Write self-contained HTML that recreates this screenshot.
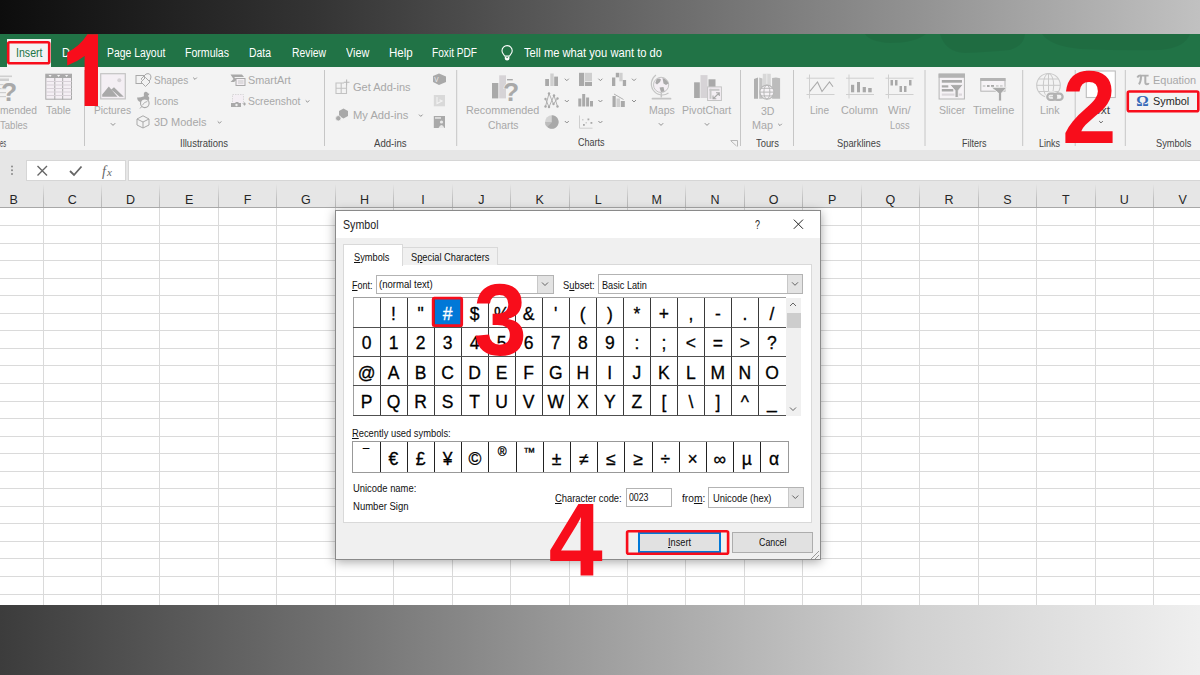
<!DOCTYPE html><html><head><meta charset="utf-8"><style>
html,body{margin:0;padding:0;width:1200px;height:675px;overflow:hidden;background:#fff}
body{position:relative;font-family:"Liberation Sans",sans-serif}
div{position:absolute}
.t{white-space:nowrap;transform-origin:0 0}
svg{position:absolute;overflow:visible}
</style></head><body>
<div style="left:0px;top:0px;width:1200px;height:34px;background:linear-gradient(to right,#0d0d0d 0%,#333333 25.8%,#626262 50.8%,#919191 75.8%,#c1c1c1 100%);"></div>
<div style="left:0px;top:34px;width:1200px;height:33px;background:#217346;"></div>
<div style="left:0px;top:67px;width:1200px;height:83px;background:#f3f3f3;"></div>
<div style="left:0px;top:150px;width:1200px;height:58px;background:#e6e6e6;"></div>
<div style="left:0px;top:208px;width:1200px;height:397px;background:#ffffff;"></div>
<div style="left:0px;top:605px;width:1200px;height:70px;background:linear-gradient(to right,#3c3c3c 0%,#6d6d6d 25.8%,#a0a0a0 50.8%,#d0d0d0 75.8%,#efefef 100%);"></div>
<div style="left:7px;top:39px;width:44px;height:28px;background:#f3f3f3;"></div>
<div class="t" style="left:15.5px;top:46.60px;font-size:12.5px;line-height:12.5px;color:#217346;transform:scaleX(0.8477);">Insert</div>
<div class="t" style="left:62px;top:46.60px;font-size:12.5px;line-height:12.5px;color:#fff;transform:scaleX(0.8862);">D</div>
<div class="t" style="left:106.7px;top:46.60px;font-size:12.5px;line-height:12.5px;color:#fff;transform:scaleX(0.8306);">Page Layout</div>
<div class="t" style="left:185px;top:46.60px;font-size:12.5px;line-height:12.5px;color:#fff;transform:scaleX(0.8447);">Formulas</div>
<div class="t" style="left:249px;top:46.60px;font-size:12.5px;line-height:12.5px;color:#fff;transform:scaleX(0.8332);">Data</div>
<div class="t" style="left:292px;top:46.60px;font-size:12.5px;line-height:12.5px;color:#fff;transform:scaleX(0.8296);">Review</div>
<div class="t" style="left:345.7px;top:46.60px;font-size:12.5px;line-height:12.5px;color:#fff;transform:scaleX(0.8672);">View</div>
<div class="t" style="left:389px;top:46.60px;font-size:12.5px;line-height:12.5px;color:#fff;transform:scaleX(0.9219);">Help</div>
<div class="t" style="left:432.3px;top:46.60px;font-size:12.5px;line-height:12.5px;color:#fff;transform:scaleX(0.8099);">Foxit PDF</div>
<div class="t" style="left:524.3px;top:46.60px;font-size:12.5px;line-height:12.5px;color:#fff;transform:scaleX(0.8947);">Tell me what you want to do</div>
<div style="left:43px;top:208px;width:1px;height:397px;background:#dadada"></div>
<div style="left:43px;top:184px;width:1px;height:24px;background:linear-gradient(#e6e6e6,#c0c0c0 60%,#b8b8b8)"></div>
<div style="left:101px;top:208px;width:1px;height:397px;background:#dadada"></div>
<div style="left:101px;top:184px;width:1px;height:24px;background:linear-gradient(#e6e6e6,#c0c0c0 60%,#b8b8b8)"></div>
<div style="left:159px;top:208px;width:1px;height:397px;background:#dadada"></div>
<div style="left:159px;top:184px;width:1px;height:24px;background:linear-gradient(#e6e6e6,#c0c0c0 60%,#b8b8b8)"></div>
<div style="left:218px;top:208px;width:1px;height:397px;background:#dadada"></div>
<div style="left:218px;top:184px;width:1px;height:24px;background:linear-gradient(#e6e6e6,#c0c0c0 60%,#b8b8b8)"></div>
<div style="left:276px;top:208px;width:1px;height:397px;background:#dadada"></div>
<div style="left:276px;top:184px;width:1px;height:24px;background:linear-gradient(#e6e6e6,#c0c0c0 60%,#b8b8b8)"></div>
<div style="left:335px;top:208px;width:1px;height:397px;background:#dadada"></div>
<div style="left:335px;top:184px;width:1px;height:24px;background:linear-gradient(#e6e6e6,#c0c0c0 60%,#b8b8b8)"></div>
<div style="left:393px;top:208px;width:1px;height:397px;background:#dadada"></div>
<div style="left:393px;top:184px;width:1px;height:24px;background:linear-gradient(#e6e6e6,#c0c0c0 60%,#b8b8b8)"></div>
<div style="left:452px;top:208px;width:1px;height:397px;background:#dadada"></div>
<div style="left:452px;top:184px;width:1px;height:24px;background:linear-gradient(#e6e6e6,#c0c0c0 60%,#b8b8b8)"></div>
<div style="left:510px;top:208px;width:1px;height:397px;background:#dadada"></div>
<div style="left:510px;top:184px;width:1px;height:24px;background:linear-gradient(#e6e6e6,#c0c0c0 60%,#b8b8b8)"></div>
<div style="left:569px;top:208px;width:1px;height:397px;background:#dadada"></div>
<div style="left:569px;top:184px;width:1px;height:24px;background:linear-gradient(#e6e6e6,#c0c0c0 60%,#b8b8b8)"></div>
<div style="left:627px;top:208px;width:1px;height:397px;background:#dadada"></div>
<div style="left:627px;top:184px;width:1px;height:24px;background:linear-gradient(#e6e6e6,#c0c0c0 60%,#b8b8b8)"></div>
<div style="left:685px;top:208px;width:1px;height:397px;background:#dadada"></div>
<div style="left:685px;top:184px;width:1px;height:24px;background:linear-gradient(#e6e6e6,#c0c0c0 60%,#b8b8b8)"></div>
<div style="left:744px;top:208px;width:1px;height:397px;background:#dadada"></div>
<div style="left:744px;top:184px;width:1px;height:24px;background:linear-gradient(#e6e6e6,#c0c0c0 60%,#b8b8b8)"></div>
<div style="left:802px;top:208px;width:1px;height:397px;background:#dadada"></div>
<div style="left:802px;top:184px;width:1px;height:24px;background:linear-gradient(#e6e6e6,#c0c0c0 60%,#b8b8b8)"></div>
<div style="left:861px;top:208px;width:1px;height:397px;background:#dadada"></div>
<div style="left:861px;top:184px;width:1px;height:24px;background:linear-gradient(#e6e6e6,#c0c0c0 60%,#b8b8b8)"></div>
<div style="left:919px;top:208px;width:1px;height:397px;background:#dadada"></div>
<div style="left:919px;top:184px;width:1px;height:24px;background:linear-gradient(#e6e6e6,#c0c0c0 60%,#b8b8b8)"></div>
<div style="left:978px;top:208px;width:1px;height:397px;background:#dadada"></div>
<div style="left:978px;top:184px;width:1px;height:24px;background:linear-gradient(#e6e6e6,#c0c0c0 60%,#b8b8b8)"></div>
<div style="left:1036px;top:208px;width:1px;height:397px;background:#dadada"></div>
<div style="left:1036px;top:184px;width:1px;height:24px;background:linear-gradient(#e6e6e6,#c0c0c0 60%,#b8b8b8)"></div>
<div style="left:1095px;top:208px;width:1px;height:397px;background:#dadada"></div>
<div style="left:1095px;top:184px;width:1px;height:24px;background:linear-gradient(#e6e6e6,#c0c0c0 60%,#b8b8b8)"></div>
<div style="left:1153px;top:208px;width:1px;height:397px;background:#dadada"></div>
<div style="left:1153px;top:184px;width:1px;height:24px;background:linear-gradient(#e6e6e6,#c0c0c0 60%,#b8b8b8)"></div>
<div style="left:1212px;top:208px;width:1px;height:397px;background:#dadada"></div>
<div style="left:1212px;top:184px;width:1px;height:24px;background:linear-gradient(#e6e6e6,#c0c0c0 60%,#b8b8b8)"></div>
<div style="left:0px;top:225px;width:1200px;height:1px;background:#dadada"></div>
<div style="left:0px;top:243px;width:1200px;height:1px;background:#dadada"></div>
<div style="left:0px;top:260px;width:1200px;height:1px;background:#dadada"></div>
<div style="left:0px;top:278px;width:1200px;height:1px;background:#dadada"></div>
<div style="left:0px;top:295px;width:1200px;height:1px;background:#dadada"></div>
<div style="left:0px;top:313px;width:1200px;height:1px;background:#dadada"></div>
<div style="left:0px;top:330px;width:1200px;height:1px;background:#dadada"></div>
<div style="left:0px;top:348px;width:1200px;height:1px;background:#dadada"></div>
<div style="left:0px;top:365px;width:1200px;height:1px;background:#dadada"></div>
<div style="left:0px;top:383px;width:1200px;height:1px;background:#dadada"></div>
<div style="left:0px;top:401px;width:1200px;height:1px;background:#dadada"></div>
<div style="left:0px;top:418px;width:1200px;height:1px;background:#dadada"></div>
<div style="left:0px;top:436px;width:1200px;height:1px;background:#dadada"></div>
<div style="left:0px;top:453px;width:1200px;height:1px;background:#dadada"></div>
<div style="left:0px;top:471px;width:1200px;height:1px;background:#dadada"></div>
<div style="left:0px;top:488px;width:1200px;height:1px;background:#dadada"></div>
<div style="left:0px;top:506px;width:1200px;height:1px;background:#dadada"></div>
<div style="left:0px;top:523px;width:1200px;height:1px;background:#dadada"></div>
<div style="left:0px;top:541px;width:1200px;height:1px;background:#dadada"></div>
<div style="left:0px;top:558px;width:1200px;height:1px;background:#dadada"></div>
<div style="left:0px;top:576px;width:1200px;height:1px;background:#dadada"></div>
<div style="left:0px;top:594px;width:1200px;height:1px;background:#dadada"></div>
<div style="left:0px;top:207px;width:1200px;height:1px;background:#a8a8a8;"></div>
<div class="t" style="left:9.6px;top:194.4px;font-size:12.5px;line-height:12.5px;color:#262626">B</div>
<div class="t" style="left:67.7px;top:194.4px;font-size:12.5px;line-height:12.5px;color:#262626">C</div>
<div class="t" style="left:126.1px;top:194.4px;font-size:12.5px;line-height:12.5px;color:#262626">D</div>
<div class="t" style="left:184.9px;top:194.4px;font-size:12.5px;line-height:12.5px;color:#262626">E</div>
<div class="t" style="left:243.7px;top:194.4px;font-size:12.5px;line-height:12.5px;color:#262626">F</div>
<div class="t" style="left:301.1px;top:194.4px;font-size:12.5px;line-height:12.5px;color:#262626">G</div>
<div class="t" style="left:359.9px;top:194.4px;font-size:12.5px;line-height:12.5px;color:#262626">H</div>
<div class="t" style="left:421.2px;top:194.4px;font-size:12.5px;line-height:12.5px;color:#262626">I</div>
<div class="t" style="left:478.2px;top:194.4px;font-size:12.5px;line-height:12.5px;color:#262626">J</div>
<div class="t" style="left:535.6px;top:194.4px;font-size:12.5px;line-height:12.5px;color:#262626">K</div>
<div class="t" style="left:594.8px;top:194.4px;font-size:12.5px;line-height:12.5px;color:#262626">L</div>
<div class="t" style="left:651.5px;top:194.4px;font-size:12.5px;line-height:12.5px;color:#262626">M</div>
<div class="t" style="left:710.6px;top:194.4px;font-size:12.5px;line-height:12.5px;color:#262626">N</div>
<div class="t" style="left:768.7px;top:194.4px;font-size:12.5px;line-height:12.5px;color:#262626">O</div>
<div class="t" style="left:827.9px;top:194.4px;font-size:12.5px;line-height:12.5px;color:#262626">P</div>
<div class="t" style="left:885.6px;top:194.4px;font-size:12.5px;line-height:12.5px;color:#262626">Q</div>
<div class="t" style="left:944.4px;top:194.4px;font-size:12.5px;line-height:12.5px;color:#262626">R</div>
<div class="t" style="left:1003.2px;top:194.4px;font-size:12.5px;line-height:12.5px;color:#262626">S</div>
<div class="t" style="left:1062.0px;top:194.4px;font-size:12.5px;line-height:12.5px;color:#262626">T</div>
<div class="t" style="left:1119.8px;top:194.4px;font-size:12.5px;line-height:12.5px;color:#262626">U</div>
<div class="t" style="left:1178.6px;top:194.4px;font-size:12.5px;line-height:12.5px;color:#262626">V</div>
<div style="left:26px;top:160px;width:100px;height:21px;background:#fff;border:1px solid #d6d6d6;box-sizing:border-box;"></div>
<div style="left:128px;top:160px;width:1072px;height:21px;background:#fff;border:1px solid #d6d6d6;box-sizing:border-box;border-right:none;"></div>
<svg style="left:0;top:0" width="1200" height="675" viewBox="0 0 1200 675"><path d="M865 34 H926 Q915 43 890 43 Q870 42 865 34Z M940 34 H1025 Q1024 46 1010 50 Q990 52 965 53 Q945 52 940 34Z M1042 34 H1190 Q1185 48 1160 50 Q1120 51 1080 49 Q1050 46 1042 34Z" fill="#000" fill-opacity="0.06"/><line x1="84.5" y1="70" x2="84.5" y2="146" stroke="#c6c6c6" stroke-width="1"/><line x1="324.5" y1="70" x2="324.5" y2="146" stroke="#c6c6c6" stroke-width="1"/><line x1="456.7" y1="70" x2="456.7" y2="146" stroke="#c6c6c6" stroke-width="1"/><line x1="740.5" y1="70" x2="740.5" y2="146" stroke="#c6c6c6" stroke-width="1"/><line x1="793.5" y1="70" x2="793.5" y2="146" stroke="#c6c6c6" stroke-width="1"/><line x1="925" y1="70" x2="925" y2="146" stroke="#c6c6c6" stroke-width="1"/><line x1="1022.7" y1="70" x2="1022.7" y2="146" stroke="#c6c6c6" stroke-width="1"/><line x1="1075.2" y1="70" x2="1075.2" y2="146" stroke="#c6c6c6" stroke-width="1"/><line x1="1125.3" y1="70" x2="1125.3" y2="146" stroke="#c6c6c6" stroke-width="1"/><rect x="-2" y="75.5" width="14" height="1.6" fill="#cfcfcf"/><rect x="-2" y="78.5" width="11" height="2.5" fill="#cfcfcf"/><rect x="-2" y="84" width="8" height="1.2" fill="#cfcfcf"/><rect x="-2" y="88" width="8" height="1.2" fill="#cfcfcf"/><rect x="-2" y="92" width="8" height="1.2" fill="#cfcfcf"/><rect x="-2" y="96" width="8" height="1.2" fill="#cfcfcf"/><text x="1" y="100.8" font-family="Liberation Sans" font-weight="bold" font-size="26.5" fill="#a9a9a9" stroke="#f3f3f3" stroke-width="1.2" paint-order="stroke">?</text><rect x="45.8" y="74.2" width="25.7" height="25" fill="#f4eff4" stroke="#a9a9a9" stroke-width="1"/><rect x="45.8" y="74.2" width="25.7" height="3.8" fill="#a9a9a9"/><line x1="54.8" y1="74" x2="54.8" y2="99.5" stroke="#a9a9a9" stroke-width="1"/><line x1="62.7" y1="74" x2="62.7" y2="99.5" stroke="#a9a9a9" stroke-width="1"/><line x1="46" y1="81.5" x2="71.5" y2="81.5" stroke="#d9d2d9" stroke-width="1"/><line x1="46" y1="85" x2="71.5" y2="85" stroke="#d9d2d9" stroke-width="1"/><line x1="46" y1="88.5" x2="71.5" y2="88.5" stroke="#d9d2d9" stroke-width="1"/><line x1="46" y1="92" x2="71.5" y2="92" stroke="#d9d2d9" stroke-width="1"/><line x1="46" y1="95.5" x2="71.5" y2="95.5" stroke="#d9d2d9" stroke-width="1"/><path d="M48.5 75 l1.6 2 l1.6-2 M57 75 l1.6 2 l1.6-2 M65 75 l1.6 2 l1.6-2" fill="#f3f3f3"/><rect x="100.7" y="73.7" width="24.6" height="25.2" fill="#f4eff4" stroke="#c4c4c4" stroke-width="1.2"/><path d="M102.2 96.8 V94.5 L108.8 86.5 L117.5 96.8Z M111.3 89.5 L114 87.2 L123.8 96.8 H119.5Z" fill="#a9a9a9"/><circle cx="119.3" cy="80.3" r="2" fill="#d6d2d6"/><path d="M110.8 123.2L113 125.39999999999999L115.2 123.2" fill="none" stroke="#8f8f8f" stroke-width="1"/><rect x="136" y="75.5" width="8.5" height="8" fill="none" stroke="#a9a9a9" stroke-width="1"/><path d="M141 79 L146 74 Q150.5 72.5 151 77 Q151 80 148 82 L146 84 L141.5 79.5 Z" fill="none" stroke="#a9a9a9" stroke-width="1"/><path d="M141 82 L145.5 77.5 L150 82 L145.5 86.5Z" fill="#f3f3f3" stroke="#a9a9a9" stroke-width="1"/><path d="M193.2 77.6L195 79.4L196.8 77.6" fill="none" stroke="#8f8f8f" stroke-width="1"/><path d="M137 97.5 Q137.5 102.5 143 102.5 L147 101.5 Q150 99.5 149 97 L147.8 96 Q149.5 94.8 149.3 93.6 L148 93.6 Q147.5 91.5 145.5 91.8 Q143.3 92.3 143.8 94.8 L144 96.3 Q140 97.8 137 97.5Z" fill="#a9a9a9"/><circle cx="144.8" cy="103.3" r="4.3" fill="#f3f3f3" stroke="#a9a9a9" stroke-width="1.1"/><path d="M142.3 105.3 Q144.5 101.5 147.3 101.5" fill="none" stroke="#a9a9a9" stroke-width="0.9"/><path d="M141.8 106.5 L140 108.5" stroke="#a9a9a9" stroke-width="1"/><path d="M143 115.8 L149 119 V125 L143 128 L137 125 V119Z M137 119 L143 122 L149 119 M143 122 V128" fill="none" stroke="#a9a9a9" stroke-width="1"/><path d="M217.7 121.39999999999999L219.5 123.2L221.3 121.39999999999999" fill="none" stroke="#8f8f8f" stroke-width="1"/><path d="M230.5 74.5 H242 L244 77 H234 L237 79.5 L234 82 H230.5 L233.5 79Z" fill="#a9a9a9"/><rect x="236" y="78.5" width="9" height="7" fill="#f4eff4" stroke="#a9a9a9" stroke-width="1"/><line x1="238" y1="81" x2="243.5" y2="81" stroke="#c8c8c8"/><line x1="238" y1="83" x2="243.5" y2="83" stroke="#c8c8c8"/><rect x="232.5" y="94.5" width="11" height="9" fill="#f4eff4" stroke="#d0d0d0" stroke-width="0.8" stroke-dasharray="1.5 1"/><path d="M231 103 H235 L236 102 H238 L239 103 H241 V107 H231Z" fill="#a9a9a9"/><circle cx="236.5" cy="105" r="1.2" fill="#eee"/><path d="M243 104 H246 M244.5 102.5 V105.5" stroke="#a9a9a9" stroke-width="1.2"/><path d="M305.7 100.39999999999999L307.5 102.2L309.3 100.39999999999999" fill="none" stroke="#8f8f8f" stroke-width="1"/><path d="M336 83 H346.5 V93.5 H336Z M336 88.3 H346.5 M341.2 83 V93.5" fill="none" stroke="#c2c2c2" stroke-width="1.1"/><rect x="344" y="81" width="4.5" height="3.5" fill="#f3f3f3"/><path d="M343.8 82.3 H349.5 M346.6 79.5 V85.2" stroke="#b9b9b9" stroke-width="1.1"/><path d="M343.5 108.5 L348 111 V116 L343.5 118.5 L339 116 V111Z" fill="#a9a9a9"/><circle cx="338.3" cy="118.3" r="2.7" fill="#a9a9a9" stroke="#f3f3f3" stroke-width="0.8"/><path d="M419.0 114.6L420.8 116.4L422.6 114.6" fill="none" stroke="#8f8f8f" stroke-width="1"/><path d="M433 76 L439 73.5 L446 76.5 V82 L439 85 L433 82Z" fill="#a9a9a9"/><text x="434.2" y="82" font-size="6.5" fill="#eee" font-family="Liberation Sans">V</text><rect x="433.8" y="95" width="11.2" height="11.3" fill="#d9d9d9"/><path d="M437 97 V103.5 L442 101 L439.5 99.8" fill="none" stroke="#f3f3f3" stroke-width="1.1"/><rect x="433.8" y="116" width="11.2" height="12" fill="#a9a9a9"/><rect x="435" y="117.2" width="6" height="1.5" fill="#e8e8e8"/><circle cx="441.5" cy="122" r="1.6" fill="#e8e8e8"/><path d="M438.5 128 Q441.5 122 444.5 128Z" fill="#e8e8e8"/><rect x="492" y="83" width="6.3" height="15.4" fill="#a9a9a9"/><rect x="499.2" y="75.3" width="6.8" height="23.1" fill="#d6d3d6"/><rect x="507" y="79" width="5.8" height="1.4" fill="#a9a9a9"/><text x="503" y="100.8" font-family="Liberation Sans" font-weight="bold" font-size="26.5" fill="#a9a9a9" stroke="#f3f3f3" stroke-width="1.2" paint-order="stroke">?</text><rect x="545.2" y="79" width="3.8" height="7" fill="#a9a9a9"/><rect x="550.3" y="73.5" width="3.4" height="12.5" fill="#cfcfcf"/><rect x="554.2" y="76.6" width="3.8" height="9.4" fill="#a9a9a9"/><rect x="579" y="72.8" width="5.2" height="13.2" fill="#a9a9a9"/><rect x="585" y="72.8" width="7" height="8.5" fill="#cfcfcf"/><rect x="585" y="82" width="7" height="4" fill="#a9a9a9"/><rect x="612" y="77.5" width="3.3" height="8.5" fill="#a9a9a9"/><rect x="615.8" y="72.8" width="3.3" height="4.5" fill="#a9a9a9"/><rect x="619.3" y="72.8" width="3.3" height="8.5" fill="#cfcfcf"/><rect x="622.8" y="80" width="3.3" height="6" fill="#a9a9a9"/><path d="M545.5 106.5 L549 93.5 L553.5 104 L557.5 98.5 M545.5 99 L549 107 L554 95.5 L557.5 106.5" fill="none" stroke="#a9a9a9" stroke-width="0.9"/><circle cx="545.5" cy="106.5" r="1.2" fill="#a9a9a9"/><circle cx="549" cy="93.5" r="1.2" fill="#a9a9a9"/><circle cx="553.5" cy="104" r="1.2" fill="#a9a9a9"/><circle cx="557.5" cy="98.5" r="1.2" fill="#a9a9a9"/><circle cx="545.5" cy="99" r="1.2" fill="#a9a9a9"/><circle cx="549" cy="107" r="1.2" fill="#a9a9a9"/><circle cx="554" cy="95.5" r="1.2" fill="#a9a9a9"/><circle cx="557.5" cy="106.5" r="1.2" fill="#a9a9a9"/><rect x="578.3" y="98.5" width="3" height="8" fill="#a9a9a9"/><rect x="582.2" y="94" width="3" height="12.5" fill="#a9a9a9"/><rect x="586.1" y="97.5" width="3" height="9" fill="#a9a9a9"/><rect x="590" y="101" width="3" height="5.5" fill="#a9a9a9"/><rect x="612.5" y="96" width="3.2" height="11" fill="#a9a9a9"/><rect x="616.5" y="98.5" width="3.5" height="8.5" fill="#cfcfcf"/><rect x="620.8" y="101" width="4" height="6" fill="#a9a9a9"/><path d="M614 94 L623.5 99.5" stroke="#a9a9a9" stroke-width="0.9"/><circle cx="551.8" cy="122" r="6.8" fill="#d4d4d4"/><path d="M551.8 122 V115.2 A6.8 6.8 0 1 1 547 126.8 Z" fill="#a9a9a9"/><path d="M551.8 122 L547 126.8 A6.8 6.8 0 0 1 545 122 Z" fill="#bcbcbc"/><path d="M579.5 115.5 V128.2 H592.5" fill="none" stroke="#cfcfcf" stroke-width="1"/><rect x="583" y="124" width="1.8" height="1.8" fill="#a9a9a9"/><rect x="587.5" y="118.5" width="1.8" height="1.8" fill="#a9a9a9"/><rect x="590.5" y="122" width="1.8" height="1.8" fill="#a9a9a9"/><rect x="582" y="119" width="1.5" height="1.5" fill="#cfcfcf"/><rect x="585.5" y="122" width="1.5" height="1.5" fill="#cfcfcf"/><path d="M564.8 78.7L566.8 80.7L568.8 78.7" fill="none" stroke="#8f8f8f" stroke-width="1"/><path d="M564.8 100.0L566.8 102.0L568.8 100.0" fill="none" stroke="#8f8f8f" stroke-width="1"/><path d="M564.8 121.0L566.8 123.0L568.8 121.0" fill="none" stroke="#8f8f8f" stroke-width="1"/><path d="M598.4 78.7L600.4 80.7L602.4 78.7" fill="none" stroke="#8f8f8f" stroke-width="1"/><path d="M598.4 100.0L600.4 102.0L602.4 100.0" fill="none" stroke="#8f8f8f" stroke-width="1"/><path d="M598.4 121.0L600.4 123.0L602.4 121.0" fill="none" stroke="#8f8f8f" stroke-width="1"/><path d="M632.0 78.7L634 80.7L636.0 78.7" fill="none" stroke="#8f8f8f" stroke-width="1"/><path d="M632.0 100.0L634 102.0L636.0 100.0" fill="none" stroke="#8f8f8f" stroke-width="1"/><circle cx="661.1" cy="84.9" r="7.6" fill="#f4eff4" stroke="#c4c4c4" stroke-width="1"/><path d="M656.5 79.5 Q659 77.5 661 79.5 L660 82 L657 84.5 L655.3 83Z M662.5 78 Q667 79 668.5 83.5 L666 85 L663.5 83.5Z M659.5 87.5 L663.5 87 L664.5 91.5 L661 92Z" fill="#a9a9a9"/><path d="M656 75 A10.8 10.8 0 1 0 668.5 93" fill="none" stroke="#c4c4c4" stroke-width="1.1"/><path d="M661.3 93 V97.5" stroke="#c4c4c4" stroke-width="1.5"/><path d="M652.5 98.7 H670.5" stroke="#c4c4c4" stroke-width="1.8" stroke-linecap="round"/><path d="M658.8 123.2L661 125.39999999999999L663.2 123.2" fill="none" stroke="#8f8f8f" stroke-width="1"/><rect x="694.1" y="82.3" width="5.7" height="15.7" fill="#a9a9a9"/><rect x="700.5" y="75.1" width="7" height="22.9" fill="#d6d3d6"/><rect x="708.5" y="79.3" width="7" height="8" fill="#a9a9a9"/><rect x="707.6" y="86.9" width="13.8" height="13.6" fill="#f4eff4" stroke="#c4c4c4" stroke-width="1"/><rect x="709.5" y="88.8" width="10" height="2" fill="#c8c8c8"/><rect x="709.5" y="88.8" width="2" height="10" fill="#c8c8c8"/><path d="M713.5 98.5 L719 93 M713 95.5 V98.8 H716.3 M719.3 96 V92.7 H716" fill="none" stroke="#a9a9a9" stroke-width="1.1"/><path d="M704.8 123.2L707 125.39999999999999L709.2 123.2" fill="none" stroke="#8f8f8f" stroke-width="1"/><path d="M754 79 L758 77.6 V98.7 L754 98.7Z" fill="#b0b0b0"/><path d="M759.2 77.6 L762.5 78.5 V98.7 H759.2Z" fill="#c2c2c2"/><rect x="762.8" y="73.8" width="8" height="24.5" fill="#d8d8d8"/><line x1="766.8" y1="73.8" x2="766.8" y2="90" stroke="#f3f3f3" stroke-width="0.7"/><path d="M772.1 78 L776 77.4 L780.1 78.3 V98.7 H772.1Z" fill="#bcbcbc"/><circle cx="766.9" cy="92.1" r="7" fill="#f6f3f6" stroke="#b8b8b8" stroke-width="1.2"/><ellipse cx="766.9" cy="92.1" rx="3" ry="7" fill="none" stroke="#b8b8b8" stroke-width="1"/><path d="M760 92.1 H773.8 M761 88.3 H772.8 M761 95.9 H772.8" stroke="#b8b8b8" stroke-width="1"/><path d="M778.2 123.8L780 125.60000000000001L781.8 123.8" fill="none" stroke="#8f8f8f" stroke-width="1"/><path d="M806.5 78.2 H834.5 M806.5 94.5 H834.5 M809.5 74.5 V98.5" stroke="#cfcfcf" stroke-width="1"/><path d="M846 78.2 H874 M846 94.5 H874 M849 74.5 V98.5" stroke="#cfcfcf" stroke-width="1"/><path d="M885.5 78.2 H913.5 M885.5 94.5 H913.5 M888.5 74.5 V98.5" stroke="#cfcfcf" stroke-width="1"/><path d="M809.8 91.3 L817.5 82 L822 91.5 L829.5 82 L833 86.8" fill="none" stroke="#ababab" stroke-width="1.1"/><rect x="851" y="84.8" width="3.2" height="7.5" fill="#a9a9a9"/><rect x="857" y="82" width="3" height="10.3" fill="#a9a9a9"/><rect x="862.7" y="87" width="3.2" height="5.3" fill="#a9a9a9"/><rect x="868.2" y="88" width="3.5" height="4.3" fill="#a9a9a9"/><rect x="890.5" y="80" width="2.5" height="5.5" fill="#a9a9a9"/><rect x="895" y="80" width="2.5" height="5.5" fill="#a9a9a9"/><rect x="899.5" y="86" width="2.5" height="6" fill="#a9a9a9"/><rect x="904" y="86" width="2.5" height="6" fill="#a9a9a9"/><rect x="909" y="80" width="2.5" height="5.5" fill="#a9a9a9"/><rect x="939.1" y="74.1" width="25.3" height="24.9" fill="#f6f3f6" stroke="#b5b5b5" stroke-width="1"/><rect x="938.6" y="73.6" width="26.3" height="4.2" fill="#b3b3b3"/><rect x="941.8" y="80" width="20.2" height="2.7" fill="#a9a9a9"/><rect x="941.8" y="85.3" width="6.5" height="2.2" fill="#a9a9a9"/><rect x="941.8" y="89" width="11.5" height="2.5" fill="#a9a9a9"/><rect x="941.8" y="93.5" width="20.2" height="2.2" fill="#dcd7dc"/><path d="M949.8 84.6 H963.2 L958.3 90.5 V97.5 H955 V90.5Z" fill="#a9a9a9" stroke="#f6f3f6" stroke-width="0.9"/><rect x="980.8" y="78.6" width="24.2" height="12.6" fill="#f6f3f6" stroke="#b5b5b5" stroke-width="1"/><rect x="980.3" y="78.1" width="25.2" height="2.9" fill="#b3b3b3"/><rect x="982.8" y="85" width="2.6" height="2" fill="#d2d2d2"/><rect x="987" y="85" width="2.6" height="2" fill="#a9a9a9"/><rect x="991" y="85" width="3" height="2" fill="#a9a9a9"/><rect x="996" y="85" width="2.6" height="2" fill="#d2d2d2"/><rect x="1000" y="85" width="2.6" height="2" fill="#d2d2d2"/><path d="M991 87.3 H1007 L1001.6 93 V101 H998.4 V93Z" fill="#a9a9a9" stroke="#f3f3f3" stroke-width="0.9"/><circle cx="1048.5" cy="85.3" r="11.8" fill="#f3f3f3" stroke="#c9c9c9" stroke-width="1.1"/><ellipse cx="1048.5" cy="85.3" rx="5.2" ry="11.8" fill="none" stroke="#c9c9c9" stroke-width="1"/><path d="M1036.7 85.3 H1060.3 M1038.5 79 H1058.5 M1038.5 91.5 H1058.5 M1048.5 73.5 V97" stroke="#c9c9c9" stroke-width="1"/><rect x="1047.3" y="93.6" width="8.8" height="6.2" rx="3.1" fill="none" stroke="#f3f3f3" stroke-width="4.5"/><rect x="1047.3" y="93.6" width="8.8" height="6.2" rx="3.1" fill="none" stroke="#b3b3b3" stroke-width="2.3"/><rect x="1053.8" y="93.6" width="8.8" height="6.2" rx="3.1" fill="none" stroke="#b3b3b3" stroke-width="2.3"/><rect x="1086.3" y="71" width="29" height="26.5" fill="#fff" stroke="#bdbdbd" stroke-width="1.1"/><path d="M1099.2 121.1L1101 122.9L1102.8 121.1" fill="none" stroke="#666" stroke-width="1"/><path d="M1137.3 77.5 Q1138.5 75.3 1141 75.6 H1148.6" fill="none" stroke="#b0b0b0" stroke-width="1.9"/><path d="M1141 76 Q1141 81.5 1139 84.3" fill="none" stroke="#b0b0b0" stroke-width="2"/><path d="M1145.3 76 V82 Q1145.3 84.3 1147 84.3 Q1148.2 84.3 1148.6 83" fill="none" stroke="#b0b0b0" stroke-width="2"/><text x="1136.2" y="106" font-family="Liberation Serif" font-weight="bold" font-size="15.5" fill="#3568b8">Ω</text></svg>
<div class="t" style="left:0px;top:104.69px;font-size:11.5px;line-height:11.5px;color:#a8a8a8;transform:scaleX(0.8903);">mended</div>
<div class="t" style="left:0px;top:119.69px;font-size:11.5px;line-height:11.5px;color:#a8a8a8;transform:scaleX(0.8303);">Tables</div>
<div class="t" style="left:46px;top:104.69px;font-size:11.5px;line-height:11.5px;color:#a8a8a8;transform:scaleX(0.8984);">Table</div>
<div class="t" style="left:94px;top:104.69px;font-size:11.5px;line-height:11.5px;color:#a8a8a8;transform:scaleX(0.8907);">Pictures</div>
<div class="t" style="left:153.8px;top:74.69px;font-size:11.5px;line-height:11.5px;color:#a8a8a8;transform:scaleX(0.8768);">Shapes</div>
<div class="t" style="left:153.8px;top:95.59px;font-size:11.5px;line-height:11.5px;color:#a8a8a8;transform:scaleX(0.8913);">Icons</div>
<div class="t" style="left:153.8px;top:116.89px;font-size:11.5px;line-height:11.5px;color:#a8a8a8;transform:scaleX(0.9551);">3D Models</div>
<div class="t" style="left:248px;top:74.69px;font-size:11.5px;line-height:11.5px;color:#a8a8a8;transform:scaleX(0.9434);">SmartArt</div>
<div class="t" style="left:248px;top:95.59px;font-size:11.5px;line-height:11.5px;color:#a8a8a8;transform:scaleX(0.8990);">Screenshot</div>
<div class="t" style="left:352.5px;top:81.89px;font-size:11.5px;line-height:11.5px;color:#a8a8a8;transform:scaleX(0.9569);">Get Add-ins</div>
<div class="t" style="left:352.5px;top:110.19px;font-size:11.5px;line-height:11.5px;color:#a8a8a8;transform:scaleX(0.9722);">My Add-ins</div>
<div class="t" style="left:465.8px;top:104.69px;font-size:11.5px;line-height:11.5px;color:#a8a8a8;transform:scaleX(0.9386);">Recommended</div>
<div class="t" style="left:487.5px;top:119.69px;font-size:11.5px;line-height:11.5px;color:#a8a8a8;transform:scaleX(0.9005);">Charts</div>
<div class="t" style="left:648.6px;top:105.39px;font-size:11.5px;line-height:11.5px;color:#a8a8a8;transform:scaleX(0.9174);">Maps</div>
<div class="t" style="left:682.4px;top:105.39px;font-size:11.5px;line-height:11.5px;color:#a8a8a8;transform:scaleX(0.9164);">PivotChart</div>
<div class="t" style="left:760.5px;top:106.19px;font-size:11.5px;line-height:11.5px;color:#a8a8a8;transform:scaleX(0.9183);">3D</div>
<div class="t" style="left:752px;top:120.39px;font-size:11.5px;line-height:11.5px;color:#a8a8a8;transform:scaleX(0.9387);">Map</div>
<div class="t" style="left:810.3px;top:105.19px;font-size:11.5px;line-height:11.5px;color:#a8a8a8;transform:scaleX(0.8738);">Line</div>
<div class="t" style="left:840.5px;top:105.19px;font-size:11.5px;line-height:11.5px;color:#a8a8a8;transform:scaleX(0.9362);">Column</div>
<div class="t" style="left:887.7px;top:105.19px;font-size:11.5px;line-height:11.5px;color:#a8a8a8;transform:scaleX(0.9826);">Win/</div>
<div class="t" style="left:889.5px;top:119.89px;font-size:11.5px;line-height:11.5px;color:#a8a8a8;transform:scaleX(0.8027);">Loss</div>
<div class="t" style="left:938.7px;top:104.89px;font-size:11.5px;line-height:11.5px;color:#a8a8a8;transform:scaleX(0.9146);">Slicer</div>
<div class="t" style="left:972.5px;top:104.89px;font-size:11.5px;line-height:11.5px;color:#a8a8a8;transform:scaleX(0.9598);">Timeline</div>
<div class="t" style="left:1040px;top:104.89px;font-size:11.5px;line-height:11.5px;color:#a8a8a8;transform:scaleX(0.9243);">Link</div>
<div class="t" style="left:1153.3px;top:74.59px;font-size:11.5px;line-height:11.5px;color:#a8a8a8;transform:scaleX(0.9515);">Equation</div>
<div class="t" style="left:1088px;top:104.89px;font-size:11.5px;line-height:11.5px;color:#444;transform:scaleX(1.0431);">Text</div>
<div class="t" style="left:1153.3px;top:95.59px;font-size:11.5px;line-height:11.5px;color:#262626;transform:scaleX(0.9440);">Symbol</div>
<div class="t" style="left:0px;top:138.09px;font-size:11.5px;line-height:11.5px;color:#444444;transform:scaleX(0.4940);">es</div>
<div class="t" style="left:180px;top:137.69px;font-size:11.5px;line-height:11.5px;color:#444444;transform:scaleX(0.8253);">Illustrations</div>
<div class="t" style="left:373.7px;top:137.69px;font-size:11.5px;line-height:11.5px;color:#444444;transform:scaleX(0.8360);">Add-ins</div>
<div class="t" style="left:577.6px;top:137.39px;font-size:11.5px;line-height:11.5px;color:#444444;transform:scaleX(0.7794);">Charts</div>
<div class="t" style="left:755.6px;top:137.89px;font-size:11.5px;line-height:11.5px;color:#444444;transform:scaleX(0.8143);">Tours</div>
<div class="t" style="left:836.8px;top:137.69px;font-size:11.5px;line-height:11.5px;color:#444444;transform:scaleX(0.8120);">Sparklines</div>
<div class="t" style="left:961.5px;top:137.59px;font-size:11.5px;line-height:11.5px;color:#444444;transform:scaleX(0.7826);">Filters</div>
<div class="t" style="left:1038.5px;top:137.59px;font-size:11.5px;line-height:11.5px;color:#444444;transform:scaleX(0.7822);">Links</div>
<div class="t" style="left:1156.4px;top:137.59px;font-size:11.5px;line-height:11.5px;color:#444444;transform:scaleX(0.8028);">Symbols</div>
<svg style="left:0;top:0" width="1200" height="675" viewBox="0 0 1200 675"><path d="M730.5 140.5 H737.5 V146.5 M731 141 L736.5 146" fill="none" stroke="#b0b0b0" stroke-width="0.9"/></svg>
<svg style="left:0;top:0" width="1200" height="675" viewBox="0 0 1200 675"><circle cx="12" cy="166.5" r="1" fill="#8a8a8a"/><circle cx="12" cy="170.3" r="1" fill="#8a8a8a"/><circle cx="12" cy="174" r="1" fill="#8a8a8a"/><path d="M37.5 166 L47 175.5 M47 166 L37.5 175.5" stroke="#666" stroke-width="1.4"/><path d="M70 171 L74 175 L81.5 166.5" fill="none" stroke="#666" stroke-width="1.8"/><text x="102" y="176" font-family="Liberation Serif" font-style="italic" font-size="14" fill="#666">f</text><text x="107" y="176" font-family="Liberation Serif" font-style="italic" font-size="11" fill="#666">x</text><path d="M504.6 56 L503.2 53.8 Q502 52.3 502 50.7 A5.1 5.1 0 1 1 512.2 50.7 Q512.2 52.3 511 53.8 L509.6 56 Z" fill="none" stroke="#fff" stroke-width="1.1"/><path d="M504.8 56.5 H509.4 V58.5 Q509.4 60.5 507.1 60.5 Q504.8 60.5 504.8 58.5Z" fill="#fff"/><circle cx="507.1" cy="57.5" r="0.7" fill="#217346"/></svg>
<div style="left:335px;top:210px;width:486px;height:350px;background:#f0f0f0;border:1px solid #8a8a8a;box-sizing:border-box;box-shadow:0 2px 10px rgba(0,0,0,0.35);"></div>
<div style="left:336px;top:211px;width:484px;height:27px;background:#fff;"></div>
<div class="t" style="left:342.5px;top:218.50px;font-size:12.3px;line-height:12.3px;color:#1e1e1e;transform:scaleX(0.8656);">Symbol</div>
<div class="t" style="left:754.5px;top:218.54px;font-size:12px;line-height:12px;color:#222;transform:scaleX(0.7492);">?</div>
<svg style="left:0;top:0" width="1200" height="675" viewBox="0 0 1200 675"><path d="M793.8 219.6 L803 228.8 M803 219.6 L793.8 228.8" stroke="#222" stroke-width="1"/></svg>
<div style="left:342.5px;top:264px;width:469.5px;height:258.5px;background:#fff;border:1px solid #d9d9d9;box-sizing:border-box;"></div>
<div style="left:402px;top:247px;width:96px;height:18px;background:#f0f0f0;border:1px solid #d9d9d9;border-bottom:none;box-sizing:border-box;"></div>
<div style="left:342.5px;top:244px;width:60px;height:22px;background:#fff;border:1px solid #d9d9d9;border-bottom:none;box-sizing:border-box;"></div>
<div class="t" style="left:354px;top:252.57px;font-size:10.3px;line-height:10.3px;color:#111;transform:scaleX(0.8989);"><u>S</u>ymbols</div>
<div class="t" style="left:410.5px;top:253.07px;font-size:10.3px;line-height:10.3px;color:#111;transform:scaleX(0.9021);">S<u>p</u>ecial Characters</div>
<div class="t" style="left:352.4px;top:280.57px;font-size:10.3px;line-height:10.3px;color:#111;transform:scaleX(0.8777);"><u>F</u>ont:</div>
<div style="left:376px;top:274.5px;width:177.5px;height:19px;background:#fff;border:1px solid #b3b3b3;box-sizing:border-box;"></div>
<div style="left:537px;top:275.5px;width:15.5px;height:17px;background:#e3e3e3;border-left:1px solid #c8c8c8;box-sizing:border-box;"></div>
<div class="t" style="left:378.8px;top:280.07px;font-size:10.3px;line-height:10.3px;color:#111;transform:scaleX(0.9290);">(normal text)</div>
<div class="t" style="left:563.3px;top:280.57px;font-size:10.3px;line-height:10.3px;color:#111;transform:scaleX(0.9076);">S<u>u</u>bset:</div>
<div style="left:598px;top:274px;width:205px;height:19.5px;background:#fff;border:1px solid #b3b3b3;box-sizing:border-box;"></div>
<div style="left:787px;top:275px;width:15px;height:17.5px;background:#e3e3e3;border-left:1px solid #c8c8c8;box-sizing:border-box;"></div>
<div class="t" style="left:601.5px;top:280.57px;font-size:10.3px;line-height:10.3px;color:#111;transform:scaleX(0.8892);">Basic Latin</div>
<div style="left:785.5px;top:297.6px;width:15.5px;height:118px;background:#f0f0f0;"></div>
<div style="left:787px;top:313px;width:13.5px;height:14.5px;background:#cdcdcd;"></div>
<div class="t" style="left:352.3px;top:428.57px;font-size:10.3px;line-height:10.3px;color:#111;transform:scaleX(0.9074);"><u>R</u>ecently used symbols:</div>
<div style="left:352px;top:441px;width:436px;height:32px;background:#fff;"></div>
<div class="t" style="left:352.7px;top:483.77px;font-size:10.3px;line-height:10.3px;color:#111;transform:scaleX(0.9137);">Unicode name:</div>
<div class="t" style="left:352.7px;top:502.27px;font-size:10.3px;line-height:10.3px;color:#111;transform:scaleX(0.9250);">Number Sign</div>
<div class="t" style="left:555.3px;top:493.57px;font-size:10.3px;line-height:10.3px;color:#111;transform:scaleX(0.9102);"><u>C</u>haracter code:</div>
<div style="left:626px;top:488px;width:46px;height:19px;background:#fff;border:1px solid #b3b3b3;box-sizing:border-box;"></div>
<div class="t" style="left:628.5px;top:493.27px;font-size:10.3px;line-height:10.3px;color:#111;transform:scaleX(0.8511);">0023</div>
<div class="t" style="left:681.8px;top:493.57px;font-size:10.3px;line-height:10.3px;color:#111;transform:scaleX(0.9889);">fro<u>m</u>:</div>
<div style="left:708px;top:487px;width:95.5px;height:20.5px;background:#fff;border:1px solid #b3b3b3;box-sizing:border-box;"></div>
<div style="left:787.5px;top:488px;width:15px;height:18.5px;background:#e3e3e3;border-left:1px solid #c8c8c8;box-sizing:border-box;"></div>
<div class="t" style="left:712.5px;top:493.57px;font-size:10.3px;line-height:10.3px;color:#111;transform:scaleX(0.9124);">Unicode (hex)</div>
<div style="left:638px;top:531.5px;width:82.5px;height:21px;background:#e1e1e1;border:2px solid #0078d7;box-sizing:border-box;"></div>
<div class="t" style="left:667.5px;top:537.57px;font-size:10.3px;line-height:10.3px;color:#111;transform:scaleX(0.8929);"><u>I</u>nsert</div>
<div style="left:731.5px;top:531.5px;width:81.5px;height:21px;background:#e1e1e1;border:1px solid #adadad;box-sizing:border-box;"></div>
<div class="t" style="left:758.5px;top:537.57px;font-size:10.3px;line-height:10.3px;color:#111;transform:scaleX(0.8577);">Cancel</div>
<svg style="left:0;top:0" width="1200" height="675" viewBox="0 0 1200 675"><path d="M542 282.5L545 285.5L548 282.5" fill="none" stroke="#555" stroke-width="0.9"/><path d="M792 282.3L795 285.3L798 282.3" fill="none" stroke="#555" stroke-width="0.9"/><path d="M792.3 495.5L795.3 498.5L798.3 495.5" fill="none" stroke="#555" stroke-width="0.9"/><path d="M790 306 L793 303 L796 306" fill="none" stroke="#555" stroke-width="0.9"/><path d="M790 407.5 L793 410.5 L796 407.5" fill="none" stroke="#555" stroke-width="0.9"/><line x1="353.5" y1="297" x2="353.5" y2="416" stroke="#a0a0a0" stroke-width="1"/><line x1="380.5" y1="297" x2="380.5" y2="416" stroke="#3a3a3a" stroke-width="1"/><line x1="407.5" y1="297" x2="407.5" y2="416" stroke="#3a3a3a" stroke-width="1"/><line x1="434.5" y1="297" x2="434.5" y2="416" stroke="#3a3a3a" stroke-width="1"/><line x1="461.5" y1="297" x2="461.5" y2="416" stroke="#3a3a3a" stroke-width="1"/><line x1="488.5" y1="297" x2="488.5" y2="416" stroke="#3a3a3a" stroke-width="1"/><line x1="515.5" y1="297" x2="515.5" y2="416" stroke="#3a3a3a" stroke-width="1"/><line x1="542.5" y1="297" x2="542.5" y2="416" stroke="#3a3a3a" stroke-width="1"/><line x1="569.5" y1="297" x2="569.5" y2="416" stroke="#3a3a3a" stroke-width="1"/><line x1="596.5" y1="297" x2="596.5" y2="416" stroke="#3a3a3a" stroke-width="1"/><line x1="623.5" y1="297" x2="623.5" y2="416" stroke="#3a3a3a" stroke-width="1"/><line x1="650.5" y1="297" x2="650.5" y2="416" stroke="#3a3a3a" stroke-width="1"/><line x1="677.5" y1="297" x2="677.5" y2="416" stroke="#3a3a3a" stroke-width="1"/><line x1="704.5" y1="297" x2="704.5" y2="416" stroke="#3a3a3a" stroke-width="1"/><line x1="731.5" y1="297" x2="731.5" y2="416" stroke="#3a3a3a" stroke-width="1"/><line x1="758.5" y1="297" x2="758.5" y2="416" stroke="#3a3a3a" stroke-width="1"/><line x1="353" y1="297.5" x2="786" y2="297.5" stroke="#a0a0a0" stroke-width="1"/><line x1="353" y1="327.5" x2="786" y2="327.5" stroke="#505050" stroke-width="1"/><line x1="353" y1="356.5" x2="786" y2="356.5" stroke="#505050" stroke-width="1"/><line x1="353" y1="385.5" x2="786" y2="385.5" stroke="#505050" stroke-width="1"/><line x1="353" y1="415.5" x2="786" y2="415.5" stroke="#505050" stroke-width="1"/><rect x="435" y="298" width="26" height="29" fill="#0078d7"/><text x="393.55" y="319.70" text-anchor="middle" font-family="Liberation Sans" font-size="17.5" fill="#000" stroke="#000" stroke-width="0.3">!</text><text x="420.57" y="319.70" text-anchor="middle" font-family="Liberation Sans" font-size="17.5" fill="#000" stroke="#000" stroke-width="0.3">&quot;</text><text x="447.61" y="319.70" text-anchor="middle" font-family="Liberation Sans" font-size="17.5" fill="#fff" stroke="#fff" stroke-width="0.3">#</text><text x="474.63" y="319.70" text-anchor="middle" font-family="Liberation Sans" font-size="17.5" fill="#000" stroke="#000" stroke-width="0.3">$</text><text x="501.67" y="319.70" text-anchor="middle" font-family="Liberation Sans" font-size="17.5" fill="#000" stroke="#000" stroke-width="0.3">%</text><text x="528.69" y="319.70" text-anchor="middle" font-family="Liberation Sans" font-size="17.5" fill="#000" stroke="#000" stroke-width="0.3">&amp;</text><text x="555.73" y="319.70" text-anchor="middle" font-family="Liberation Sans" font-size="17.5" fill="#000" stroke="#000" stroke-width="0.3">&#x27;</text><text x="582.75" y="319.70" text-anchor="middle" font-family="Liberation Sans" font-size="17.5" fill="#000" stroke="#000" stroke-width="0.3">(</text><text x="609.79" y="319.70" text-anchor="middle" font-family="Liberation Sans" font-size="17.5" fill="#000" stroke="#000" stroke-width="0.3">)</text><text x="636.82" y="319.70" text-anchor="middle" font-family="Liberation Sans" font-size="17.5" fill="#000" stroke="#000" stroke-width="0.3">*</text><text x="663.85" y="319.70" text-anchor="middle" font-family="Liberation Sans" font-size="17.5" fill="#000" stroke="#000" stroke-width="0.3">+</text><text x="690.88" y="319.70" text-anchor="middle" font-family="Liberation Sans" font-size="17.5" fill="#000" stroke="#000" stroke-width="0.3">,</text><text x="717.90" y="319.70" text-anchor="middle" font-family="Liberation Sans" font-size="17.5" fill="#000" stroke="#000" stroke-width="0.3">-</text><text x="744.93" y="319.70" text-anchor="middle" font-family="Liberation Sans" font-size="17.5" fill="#000" stroke="#000" stroke-width="0.3">.</text><text x="771.97" y="319.70" text-anchor="middle" font-family="Liberation Sans" font-size="17.5" fill="#000" stroke="#000" stroke-width="0.3">/</text><text x="366.51" y="349.10" text-anchor="middle" font-family="Liberation Sans" font-size="17.5" fill="#000" stroke="#000" stroke-width="0.3">0</text><text x="393.55" y="349.10" text-anchor="middle" font-family="Liberation Sans" font-size="17.5" fill="#000" stroke="#000" stroke-width="0.3">1</text><text x="420.57" y="349.10" text-anchor="middle" font-family="Liberation Sans" font-size="17.5" fill="#000" stroke="#000" stroke-width="0.3">2</text><text x="447.61" y="349.10" text-anchor="middle" font-family="Liberation Sans" font-size="17.5" fill="#000" stroke="#000" stroke-width="0.3">3</text><text x="474.63" y="349.10" text-anchor="middle" font-family="Liberation Sans" font-size="17.5" fill="#000" stroke="#000" stroke-width="0.3">4</text><text x="501.67" y="349.10" text-anchor="middle" font-family="Liberation Sans" font-size="17.5" fill="#000" stroke="#000" stroke-width="0.3">5</text><text x="528.69" y="349.10" text-anchor="middle" font-family="Liberation Sans" font-size="17.5" fill="#000" stroke="#000" stroke-width="0.3">6</text><text x="555.73" y="349.10" text-anchor="middle" font-family="Liberation Sans" font-size="17.5" fill="#000" stroke="#000" stroke-width="0.3">7</text><text x="582.75" y="349.10" text-anchor="middle" font-family="Liberation Sans" font-size="17.5" fill="#000" stroke="#000" stroke-width="0.3">8</text><text x="609.79" y="349.10" text-anchor="middle" font-family="Liberation Sans" font-size="17.5" fill="#000" stroke="#000" stroke-width="0.3">9</text><text x="636.82" y="349.10" text-anchor="middle" font-family="Liberation Sans" font-size="17.5" fill="#000" stroke="#000" stroke-width="0.3">:</text><text x="663.85" y="349.10" text-anchor="middle" font-family="Liberation Sans" font-size="17.5" fill="#000" stroke="#000" stroke-width="0.3">;</text><text x="690.88" y="349.10" text-anchor="middle" font-family="Liberation Sans" font-size="17.5" fill="#000" stroke="#000" stroke-width="0.3">&lt;</text><text x="717.90" y="349.10" text-anchor="middle" font-family="Liberation Sans" font-size="17.5" fill="#000" stroke="#000" stroke-width="0.3">=</text><text x="744.93" y="349.10" text-anchor="middle" font-family="Liberation Sans" font-size="17.5" fill="#000" stroke="#000" stroke-width="0.3">&gt;</text><text x="771.97" y="349.10" text-anchor="middle" font-family="Liberation Sans" font-size="17.5" fill="#000" stroke="#000" stroke-width="0.3">?</text><text x="366.51" y="378.50" text-anchor="middle" font-family="Liberation Sans" font-size="17.5" fill="#000" stroke="#000" stroke-width="0.3">@</text><text x="393.55" y="378.50" text-anchor="middle" font-family="Liberation Sans" font-size="17.5" fill="#000" stroke="#000" stroke-width="0.3">A</text><text x="420.57" y="378.50" text-anchor="middle" font-family="Liberation Sans" font-size="17.5" fill="#000" stroke="#000" stroke-width="0.3">B</text><text x="447.61" y="378.50" text-anchor="middle" font-family="Liberation Sans" font-size="17.5" fill="#000" stroke="#000" stroke-width="0.3">C</text><text x="474.63" y="378.50" text-anchor="middle" font-family="Liberation Sans" font-size="17.5" fill="#000" stroke="#000" stroke-width="0.3">D</text><text x="501.67" y="378.50" text-anchor="middle" font-family="Liberation Sans" font-size="17.5" fill="#000" stroke="#000" stroke-width="0.3">E</text><text x="528.69" y="378.50" text-anchor="middle" font-family="Liberation Sans" font-size="17.5" fill="#000" stroke="#000" stroke-width="0.3">F</text><text x="555.73" y="378.50" text-anchor="middle" font-family="Liberation Sans" font-size="17.5" fill="#000" stroke="#000" stroke-width="0.3">G</text><text x="582.75" y="378.50" text-anchor="middle" font-family="Liberation Sans" font-size="17.5" fill="#000" stroke="#000" stroke-width="0.3">H</text><text x="609.79" y="378.50" text-anchor="middle" font-family="Liberation Sans" font-size="17.5" fill="#000" stroke="#000" stroke-width="0.3">I</text><text x="636.82" y="378.50" text-anchor="middle" font-family="Liberation Sans" font-size="17.5" fill="#000" stroke="#000" stroke-width="0.3">J</text><text x="663.85" y="378.50" text-anchor="middle" font-family="Liberation Sans" font-size="17.5" fill="#000" stroke="#000" stroke-width="0.3">K</text><text x="690.88" y="378.50" text-anchor="middle" font-family="Liberation Sans" font-size="17.5" fill="#000" stroke="#000" stroke-width="0.3">L</text><text x="717.90" y="378.50" text-anchor="middle" font-family="Liberation Sans" font-size="17.5" fill="#000" stroke="#000" stroke-width="0.3">M</text><text x="744.93" y="378.50" text-anchor="middle" font-family="Liberation Sans" font-size="17.5" fill="#000" stroke="#000" stroke-width="0.3">N</text><text x="771.97" y="378.50" text-anchor="middle" font-family="Liberation Sans" font-size="17.5" fill="#000" stroke="#000" stroke-width="0.3">O</text><text x="366.51" y="407.90" text-anchor="middle" font-family="Liberation Sans" font-size="17.5" fill="#000" stroke="#000" stroke-width="0.3">P</text><text x="393.55" y="407.90" text-anchor="middle" font-family="Liberation Sans" font-size="17.5" fill="#000" stroke="#000" stroke-width="0.3">Q</text><text x="420.57" y="407.90" text-anchor="middle" font-family="Liberation Sans" font-size="17.5" fill="#000" stroke="#000" stroke-width="0.3">R</text><text x="447.61" y="407.90" text-anchor="middle" font-family="Liberation Sans" font-size="17.5" fill="#000" stroke="#000" stroke-width="0.3">S</text><text x="474.63" y="407.90" text-anchor="middle" font-family="Liberation Sans" font-size="17.5" fill="#000" stroke="#000" stroke-width="0.3">T</text><text x="501.67" y="407.90" text-anchor="middle" font-family="Liberation Sans" font-size="17.5" fill="#000" stroke="#000" stroke-width="0.3">U</text><text x="528.69" y="407.90" text-anchor="middle" font-family="Liberation Sans" font-size="17.5" fill="#000" stroke="#000" stroke-width="0.3">V</text><text x="555.73" y="407.90" text-anchor="middle" font-family="Liberation Sans" font-size="17.5" fill="#000" stroke="#000" stroke-width="0.3">W</text><text x="582.75" y="407.90" text-anchor="middle" font-family="Liberation Sans" font-size="17.5" fill="#000" stroke="#000" stroke-width="0.3">X</text><text x="609.79" y="407.90" text-anchor="middle" font-family="Liberation Sans" font-size="17.5" fill="#000" stroke="#000" stroke-width="0.3">Y</text><text x="636.82" y="407.90" text-anchor="middle" font-family="Liberation Sans" font-size="17.5" fill="#000" stroke="#000" stroke-width="0.3">Z</text><text x="663.85" y="407.90" text-anchor="middle" font-family="Liberation Sans" font-size="17.5" fill="#000" stroke="#000" stroke-width="0.3">[</text><text x="690.88" y="407.90" text-anchor="middle" font-family="Liberation Sans" font-size="17.5" fill="#000" stroke="#000" stroke-width="0.3">\</text><text x="717.90" y="407.90" text-anchor="middle" font-family="Liberation Sans" font-size="17.5" fill="#000" stroke="#000" stroke-width="0.3">]</text><text x="744.93" y="407.90" text-anchor="middle" font-family="Liberation Sans" font-size="17.5" fill="#000" stroke="#000" stroke-width="0.3">^</text><text x="771.97" y="407.90" text-anchor="middle" font-family="Liberation Sans" font-size="17.5" fill="#000" stroke="#000" stroke-width="0.3">_</text><line x1="352.5" y1="441" x2="352.5" y2="473" stroke="#999" stroke-width="1"/><line x1="380.5" y1="441" x2="380.5" y2="473" stroke="#222" stroke-width="1"/><line x1="407.5" y1="441" x2="407.5" y2="473" stroke="#222" stroke-width="1"/><line x1="434.5" y1="441" x2="434.5" y2="473" stroke="#222" stroke-width="1"/><line x1="461.5" y1="441" x2="461.5" y2="473" stroke="#222" stroke-width="1"/><line x1="488.5" y1="441" x2="488.5" y2="473" stroke="#222" stroke-width="1"/><line x1="516.5" y1="441" x2="516.5" y2="473" stroke="#222" stroke-width="1"/><line x1="543.5" y1="441" x2="543.5" y2="473" stroke="#222" stroke-width="1"/><line x1="570.5" y1="441" x2="570.5" y2="473" stroke="#222" stroke-width="1"/><line x1="597.5" y1="441" x2="597.5" y2="473" stroke="#222" stroke-width="1"/><line x1="624.5" y1="441" x2="624.5" y2="473" stroke="#222" stroke-width="1"/><line x1="652.5" y1="441" x2="652.5" y2="473" stroke="#222" stroke-width="1"/><line x1="679.5" y1="441" x2="679.5" y2="473" stroke="#222" stroke-width="1"/><line x1="706.5" y1="441" x2="706.5" y2="473" stroke="#222" stroke-width="1"/><line x1="733.5" y1="441" x2="733.5" y2="473" stroke="#222" stroke-width="1"/><line x1="760.5" y1="441" x2="760.5" y2="473" stroke="#222" stroke-width="1"/><line x1="788.5" y1="441" x2="788.5" y2="473" stroke="#999" stroke-width="1"/><line x1="352" y1="441.5" x2="788" y2="441.5" stroke="#999"/><line x1="352" y1="472.5" x2="788" y2="472.5" stroke="#999"/><text x="366.10" y="457.10" text-anchor="middle" font-family="Liberation Sans" font-size="11" fill="#000" stroke="#000" stroke-width="0.3">¯</text><text x="393.30" y="464.50" text-anchor="middle" font-family="Liberation Sans" font-size="17.5" fill="#000" stroke="#000" stroke-width="0.3">€</text><text x="420.50" y="464.50" text-anchor="middle" font-family="Liberation Sans" font-size="17.5" fill="#000" stroke="#000" stroke-width="0.3">£</text><text x="447.70" y="464.50" text-anchor="middle" font-family="Liberation Sans" font-size="17.5" fill="#000" stroke="#000" stroke-width="0.3">¥</text><text x="474.90" y="464.50" text-anchor="middle" font-family="Liberation Sans" font-size="17.5" fill="#000" stroke="#000" stroke-width="0.3">©</text><text x="502.10" y="456.10" text-anchor="middle" font-family="Liberation Sans" font-size="12" fill="#000" stroke="#000" stroke-width="0.3">®</text><text x="529.30" y="456.10" text-anchor="middle" font-family="Liberation Sans" font-size="12" fill="#000" stroke="#000" stroke-width="0.3">™</text><text x="556.50" y="464.50" text-anchor="middle" font-family="Liberation Sans" font-size="17.5" fill="#000" stroke="#000" stroke-width="0.3">±</text><text x="583.70" y="464.50" text-anchor="middle" font-family="Liberation Sans" font-size="17.5" fill="#000" stroke="#000" stroke-width="0.3">≠</text><text x="610.90" y="464.50" text-anchor="middle" font-family="Liberation Sans" font-size="17.5" fill="#000" stroke="#000" stroke-width="0.3">≤</text><text x="638.10" y="464.50" text-anchor="middle" font-family="Liberation Sans" font-size="17.5" fill="#000" stroke="#000" stroke-width="0.3">≥</text><text x="665.30" y="464.50" text-anchor="middle" font-family="Liberation Sans" font-size="17.5" fill="#000" stroke="#000" stroke-width="0.3">÷</text><text x="692.50" y="464.50" text-anchor="middle" font-family="Liberation Sans" font-size="17.5" fill="#000" stroke="#000" stroke-width="0.3">×</text><text x="719.70" y="464.50" text-anchor="middle" font-family="Liberation Sans" font-size="17.5" fill="#000" stroke="#000" stroke-width="0.3">∞</text><text x="746.90" y="464.50" text-anchor="middle" font-family="Liberation Sans" font-size="17.5" fill="#000" stroke="#000" stroke-width="0.3">µ</text><text x="774.10" y="464.50" text-anchor="middle" font-family="Liberation Sans" font-size="17.5" fill="#000" stroke="#000" stroke-width="0.3">α</text><path d="M811 559 L819 551 M815 559 L819 555" stroke="#999" stroke-width="1"/></svg>
<svg style="left:0;top:0" width="1200" height="675" viewBox="0 0 1200 675"><rect x="8.2" y="42.2" width="41" height="21" fill="none" stroke="#f80d1b" stroke-width="2.6" rx="1.5"/><path d="M87.5 34.2 H98 V106 H84.6 V56 Q77 62 67.2 65.6 V52.5 Q80 46 87.5 34.2Z" fill="#f80d1b"/><rect x="1127.8" y="91.5" width="70.5" height="19.8" fill="none" stroke="#f80d1b" stroke-width="2.6" rx="1.5"/><rect x="433.2" y="298.2" width="28.5" height="27.5" fill="none" stroke="#f80d1b" stroke-width="2.8" rx="1"/><rect x="627.1" y="531.3" width="101" height="22.4" fill="none" stroke="#f80d1b" stroke-width="2.6" rx="1.5"/></svg>
<svg style="left:0;top:0" width="1200" height="675" viewBox="0 0 1200 675"><text transform="translate(1062.06,142.70) scale(0.980,1.029)" font-family="Liberation Sans" font-weight="bold" font-size="100" fill="#f80d1b">2</text></svg>
<svg style="left:0;top:0" width="1200" height="675" viewBox="0 0 1200 675"><text transform="translate(473.58,355.00) scale(0.958,1.028)" font-family="Liberation Sans" font-weight="bold" font-size="100" fill="#f80d1b">3</text></svg>
<svg style="left:0;top:0" width="1200" height="675" viewBox="0 0 1200 675"><text transform="translate(548.66,576.40) scale(0.970,1.036)" font-family="Liberation Sans" font-weight="bold" font-size="100" fill="#f80d1b">4</text></svg>
</body></html>
